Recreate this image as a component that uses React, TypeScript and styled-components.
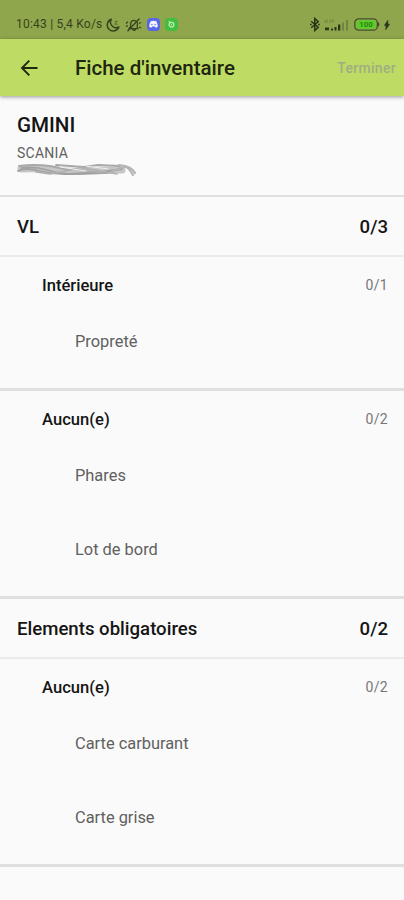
import React from "react";
import styled, { createGlobalStyle } from "styled-components";

const GlobalStyle = createGlobalStyle`
  *, *::before, *::after { box-sizing: border-box; }
  body { margin: 0; background: #fafafa; font-family: Roboto, "Liberation Sans", sans-serif; }
`;

const Screen = styled.div`
  width: 404px;
  height: 900px;
  display: flex;
  flex-direction: column;
  overflow: hidden;
  background: #fafafa;
  color: #151515;
`;

const StatusBar = styled.div`
  height: 39px;
  flex: none;
  display: flex;
  align-items: flex-start;
  justify-content: space-between;
  padding: 16px 14px 0 16px;
  background: #8fa64c;
`;

const StatusGroup = styled.div<{ $gap: number }>`
  height: 17px;
  display: flex;
  align-items: center;
  gap: ${(p) => p.$gap}px;
`;

const Clock = styled.span`
  font-size: 12px;
  line-height: 17px;
  white-space: nowrap;
  color: #38411f;
  letter-spacing: 0.22px;
  width: 85px;
`;

const AppBar = styled.header`
  height: 57px;
  flex: none;
  display: flex;
  align-items: center;
  padding: 1px 8px 0 20px;
  background: #bedc64;
  box-shadow: 0 1px 4px rgba(0, 0, 0, 0.4);
`;

const BackButton = styled.button`
  width: 55px;
  height: 40px;
  padding: 0;
  border: 0;
  background: none;
  display: flex;
  align-items: center;
`;

const Title = styled.h1`
  margin: 0;
  flex: 1;
  font-size: 20.5px;
  line-height: 28px;
  font-weight: 500;
  color: #20260f;
`;

const DoneButton = styled.button`
  padding: 0;
  border: 0;
  background: none;
  font: 500 14px/20px Roboto, sans-serif;
  letter-spacing: 0.3px;
  color: #a0ad82;
`;

const Vehicle = styled.section`
  height: 101px;
  flex: none;
  padding: 16px 17px 0;
  border-bottom: 2px solid #e0e0e0;
`;

const VehicleName = styled.h2`
  margin: 0;
  font-size: 20.6px;
  line-height: 26px;
  font-weight: 500;
`;

const VehicleBrand = styled.div`
  margin-top: 6px;
  font-size: 14px;
  letter-spacing: 0.25px;
  line-height: 18px;
  color: #606060;
`;

const Scribble = styled.svg`
  display: block;
  margin: 1px 0 0 -1px;
  filter: blur(0.5px);
`;

const SectionHeader = styled.div`
  height: 60px;
  flex: none;
  display: flex;
  align-items: center;
  justify-content: space-between;
  padding: 1px 16px 0 17px;
  border-bottom: 2px solid #ebebeb;
  font-size: 18.6px;
  line-height: 24px;
  font-weight: 500;
`;

const Group = styled.div<{ $height: number }>`
  height: ${(p) => p.$height}px;
  flex: none;
  border-bottom: 3px solid #e0e0e0;
`;

const GroupHeader = styled.div`
  height: 56px;
  display: flex;
  align-items: center;
  justify-content: space-between;
  padding: 1px 16px 0 42px;
`;

const GroupName = styled.span`
  font-size: 16.6px;
  line-height: 20px;
  font-weight: 500;
`;

const GroupCount = styled.span`
  padding-bottom: 2px;
  font-size: 14px;
  line-height: 20px;
  color: #777;
  letter-spacing: 0.3px;
`;

const Item = styled.div`
  height: 74px;
  padding: 19px 16px 0 75px;
  font-size: 16.4px;
  line-height: 20px;
  color: #606060;
`;

const ArrowIcon = () => (
  <svg width="19" height="18" viewBox="0 0 19 18" fill="none" stroke="#20260f" strokeWidth="1.9">
    <path d="M17.5 9H2.6M9.3 1.6 2 9l7.3 7.4" />
  </svg>
);

const MoonIcon = () => (
  <svg width="14" height="14" viewBox="0 0 14 14" fill="none" stroke="#38431f" strokeWidth="1.5">
    <path d="M5.3 1.3A6 6 0 1 0 12.9 9 5.6 5.6 0 0 1 5.3 1.3Z" strokeLinejoin="round" />
    <path d="M8.8 3.4h2.4L8.8 6.2h2.8" strokeWidth=".6" />
  </svg>
);

const MutedIcon = () => (
  <svg width="17" height="14" viewBox="0 0 17 14" fill="none" stroke="#38431f" strokeWidth="1.3">
    <path d="M4 10.5 5.7 8.8V5.5C6 3 8 2 10 2.7c2 .5 2.8 2 2.4 4l-.3 2.2.8 1.8H4ZM7.5 11.2c.4 1.5 2.5 1.5 3 0" />
    <path d="M14.5.5 2.5 13.3M1 5.5l2-1.7M.8 8.5l2-.9M14 5.5l2-1M14 9l2 .8" />
  </svg>
);

const ChatIcon = () => (
  <svg width="13" height="13" viewBox="0 0 13 13">
    <rect width="13" height="13" rx="4" fill="#5966e8" />
    <path d="M3.7 3.2Q6.5 2.2 9.3 3.2q1.6 2.7 1.4 5.5-1.2 1-2.3.9L7.9 8.5H5.1l-.5 1.1Q3.5 9.7 2.3 8.7 2.1 5.9 3.7 3.2Z" fill="#f4f5ff" />
    <circle cx="4.9" cy="6.5" r=".7" fill="#5966e8" />
    <circle cx="8.1" cy="6.5" r=".7" fill="#5966e8" />
  </svg>
);

const GreenIcon = () => (
  <svg width="13" height="13" viewBox="0 0 13 13" fill="none">
    <rect width="13" height="13" rx="4" fill="#43bd3f" />
    <circle cx="6.5" cy="6.7" r="2.4" stroke="#b9ecb0" strokeWidth="1.3" />
    <path d="m4.7 4.8-.9-1.4 1.7.6M6.5 6v1.4" stroke="#b9ecb0" />
  </svg>
);

const BluetoothIcon = () => (
  <svg width="10" height="15" viewBox="0 0 10 15" fill="none" stroke="#29331a" strokeWidth="1.5">
    <path d="m1.2 4.3 7 6-3.4 3.2V1.5l3.4 3.2-7 6" />
    <path d="M0 7.5h1.6M8.2 7.5h1.6" />
  </svg>
);

const SignalIcon = () => (
  <svg width="25" height="14" viewBox="0 0 25 14">
    <path d="M1 2v2h2M3 1v4M5 2h2M5 4h2M8.5 1.5v3M7.5 3h3" fill="none" stroke="#718340" strokeWidth=".9" />
    <path d="M1 9.5h4v2.8H1zM7 10.5h2v2H7zM10.5 9h2v3.5h-2zM14 6.5h2.3v6H14z" fill="#2d3819" />
    <path d="M18 4.5h2v8h-2zM22 2h2v10.5h-2z" fill="#738342" />
  </svg>
);

const BatteryIcon = () => (
  <svg width="26" height="13" viewBox="0 0 26 13">
    <rect x=".8" y=".8" width="22.5" height="11.4" rx="4" fill="#91ae50" stroke="#40522a" strokeWidth="1.3" />
    <rect x="2.8" y="2.6" width="18.5" height="7.8" rx="2.3" fill="#55cf24" />
    <path d="M24 3.8q2.4 2.7 0 5.4Z" fill="#34451f" />
    <text x="12" y="9.3" textAnchor="middle" fontFamily="Roboto" fontSize="7.8" fontWeight="700" fill="#318019">100</text>
  </svg>
);

const BoltIcon = () => (
  <svg width="6" height="10" viewBox="0 0 6 10">
    <path d="M3.9.3.4 5.6h1.8l-.5 4.1 3.9-5.5H3.7Z" fill="#29331a" stroke="#29331a" strokeWidth=".6" />
  </svg>
);

type Stroke = { d: string; width: number; color: string };

const SCRIBBLE_STROKES: Stroke[] = [
  { d: "M5 6Q20 5 38 7T68 8T106 7", width: 7, color: "#c6c6c6" },
  { d: "M3 3Q18 1 34 3L54 7M40 2L68 4L82 2L104 3", width: 1.8, color: "#a8a8a8" },
  { d: "M2 8Q9 4 24 8T54 11T86 9L106 6", width: 1.8, color: "#a2a2a2" },
  { d: "M5 5Q18 3 31 7T58 11T92 10", width: 1.5, color: "#a0a0a0" },
  { d: "M20 9L34 11L60 6L86 10M62 4L84 8L101 11", width: 1.6, color: "#b0b0b0" },
  { d: "M96 9Q107 3 110 4T117 12M103 2Q116 3 119 10", width: 2.2, color: "#b4b4b4" },
  { d: "M44 4L70 8M70 3L92 6", width: 1, color: "#efefef" },
];

type GroupData = { name: string; count: string; height: number; items: string[] };
type SectionData = { name: string; count: string; groups: GroupData[] };

const SECTIONS: SectionData[] = [
  {
    name: "VL",
    count: "0/3",
    groups: [
      { name: "Intérieure", count: "0/1", height: 134, items: ["Propreté"] },
      { name: "Aucun(e)", count: "0/2", height: 208, items: ["Phares", "Lot de bord"] },
    ],
  },
  {
    name: "Elements obligatoires",
    count: "0/2",
    groups: [{ name: "Aucun(e)", count: "0/2", height: 208, items: ["Carte carburant", "Carte grise"] }],
  },
];

export default function App() {
  return (
    <Screen>
      <GlobalStyle />
      <StatusBar>
        <StatusGroup $gap={5}>
          <Clock>10:43 | 5,4 Ko/s</Clock>
          <MoonIcon />
          <MutedIcon />
          <ChatIcon />
          <GreenIcon />
        </StatusGroup>
        <StatusGroup $gap={4.5}>
          <BluetoothIcon />
          <SignalIcon />
          <BatteryIcon />
          <BoltIcon />
        </StatusGroup>
      </StatusBar>
      <AppBar>
        <BackButton aria-label="Retour">
          <ArrowIcon />
        </BackButton>
        <Title>Fiche d'inventaire</Title>
        <DoneButton>Terminer</DoneButton>
      </AppBar>
      <Vehicle>
        <VehicleName>GMINI</VehicleName>
        <VehicleBrand>SCANIA</VehicleBrand>
        <Scribble width="122" height="15" viewBox="0 0 122 15" fill="none" strokeLinecap="round" strokeLinejoin="round">
          {SCRIBBLE_STROKES.map((s) => (
            <path key={s.d} d={s.d} stroke={s.color} strokeWidth={s.width} />
          ))}
        </Scribble>
      </Vehicle>
      {SECTIONS.map((section) => (
        <React.Fragment key={section.name}>
          <SectionHeader>
            <span>{section.name}</span>
            <span>{section.count}</span>
          </SectionHeader>
          {section.groups.map((group) => (
            <Group key={group.name} $height={group.height}>
              <GroupHeader>
                <GroupName>{group.name}</GroupName>
                <GroupCount>{group.count}</GroupCount>
              </GroupHeader>
              {group.items.map((item) => (
                <Item key={item}>{item}</Item>
              ))}
            </Group>
          ))}
        </React.Fragment>
      ))}
    </Screen>
  );
}
